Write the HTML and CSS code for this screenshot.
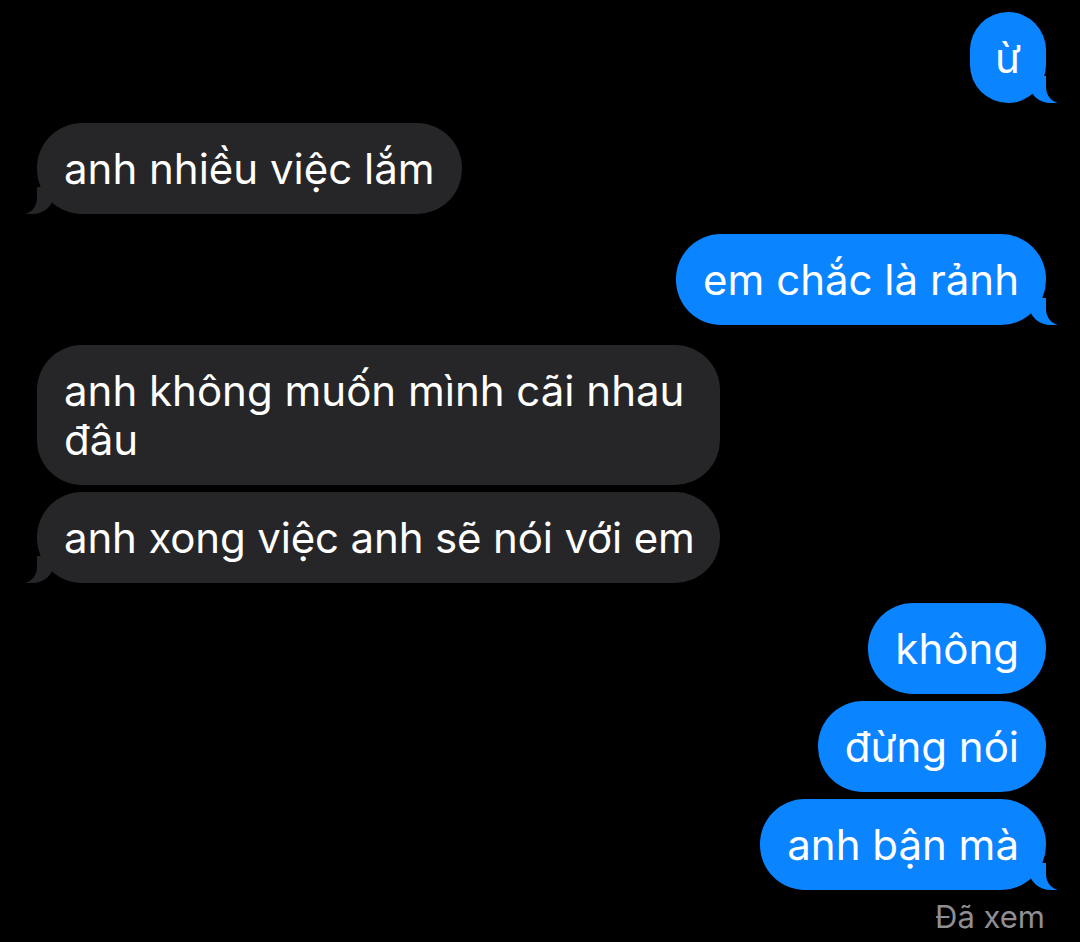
FILE: index.html
```html
<!DOCTYPE html>
<html lang="vi">
<head>
<meta charset="utf-8">
<link rel="stylesheet" href="styles.css">
</head>
<body>
<div class="chat">
  <div class="msg me tail">ừ</div>
  <div class="msg them tail">anh nhiều việc lắm</div>
  <div class="msg me tail">em chắc là rảnh</div>
  <div class="msg them wide">anh không muốn mình cãi nhau<br>đâu</div>
  <div class="msg them wide tail grouped nowrap">anh xong việc anh sẽ nói với em</div>
  <div class="msg me">không</div>
  <div class="msg me grouped">đừng nói</div>
  <div class="msg me tail grouped">anh bận mà</div>
  <div class="seen">Đã xem</div>
</div>
</body>
</html>
```
FILE: styles.css
```css
html, body {
  margin: 0;
  background: #000;
}
body {
  width: 1080px;
  height: 942px;
  overflow: hidden;
  font-family: Inter, "Noto Sans", sans-serif;
}
.chat {
  display: flex;
  flex-direction: column;
  padding: 12px 34px 0 37px;
}
.msg {
  position: relative;
  padding: 21px 27px;
  font-size: 42px;
  line-height: 49px;
  color: #fff;
  border-radius: 45px;
  margin-top: 20px;
}
.msg:first-child {
  margin-top: 0;
  padding-left: 25px;
  padding-right: 25px;
}
.msg.grouped { margin-top: 7px; }
.msg.nowrap {
  white-space: nowrap;
  letter-spacing: -0.15px;
}
.me {
  align-self: flex-end;
  background: #0a84ff;
}
.them {
  align-self: flex-start;
  background: #262628;
}
.them.wide { width: 629px; }
.msg.tail::before,
.msg.tail::after {
  content: "";
  position: absolute;
  bottom: 0;
  height: 27px;
}
.me.tail::before {
  right: -11px;
  width: 28px;
  background: #0a84ff;
  border-bottom-left-radius: 22px 20px;
}
.me.tail::after {
  right: -31px;
  width: 31px;
  background: #000;
  border-bottom-left-radius: 14px 16px;
}
.them.tail::before {
  left: -11px;
  width: 28px;
  background: #262628;
  border-bottom-right-radius: 22px 20px;
}
.them.tail::after {
  left: -31px;
  width: 31px;
  background: #000;
  border-bottom-right-radius: 14px 16px;
}
.seen {
  align-self: flex-end;
  margin-top: 9px;
  margin-right: 1px;
  font-size: 31px;
  line-height: 36px;
  color: #8e8e93;
}
```
